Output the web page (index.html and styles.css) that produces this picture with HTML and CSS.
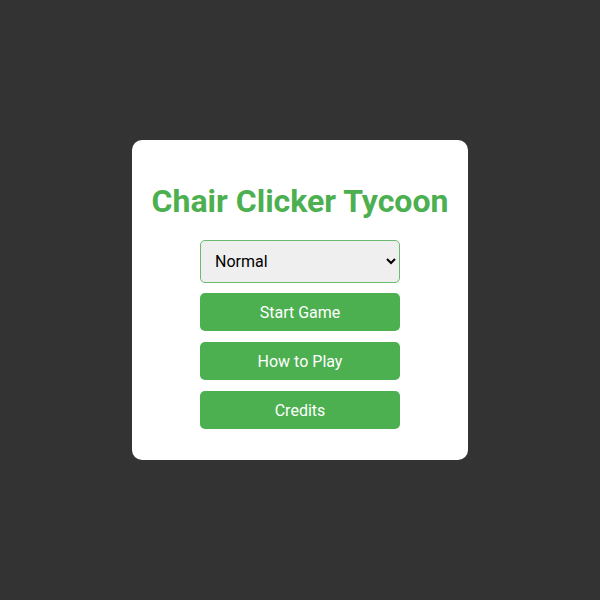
FILE: index.html
```
<!DOCTYPE html>
<html>
<head>
<meta charset="utf-8">
<link rel="stylesheet" href="styles.css">
</head>
<body>
<div class="card">
  <h1 class="title">Chair Clicker Tycoon</h1>
  <div class="menu">
    <select class="difficulty">
      <option>Easy</option>
      <option selected>Normal</option>
      <option>Hard</option>
    </select>
    <button class="btn">Start Game</button>
    <button class="btn">How to Play</button>
    <button class="btn">Credits</button>
  </div>
</div>
</body>
</html>
```
FILE: styles.css
```
html, body {
  margin: 0;
  height: 100%;
}
body {
  background: #333333;
  font-family: Roboto, "Liberation Sans", sans-serif;
  display: flex;
  align-items: center;
  justify-content: center;
}
.card {
  background: #ffffff;
  border-radius: 10px;
  padding: 20px 20px 31px;
  display: flex;
  flex-direction: column;
  align-items: center;
}
.title {
  color: #4caf50;
  font-size: 32px;
  font-weight: 700;
  margin: 23px 0 20px;
  line-height: 37px;
}
.menu {
  display: flex;
  flex-direction: column;
  gap: 10px;
  width: 200px;
}
.difficulty {
  height: 43px;
  width: 200px;
  border: 1px solid #6abb6d;
  border-radius: 5px;
  background: #efefef;
  font-family: Roboto, "Liberation Sans", sans-serif;
  font-size: 16px;
  color: #000;
  padding: 0 10px;
}
.btn {
  height: 38px;
  width: 200px;
  border: none;
  border-radius: 5px;
  background: #4caf50;
  color: #fff;
  font-family: Roboto, "Liberation Sans", sans-serif;
  font-size: 16px;
  padding: 0;
}
.btn + .btn {
  margin-top: 1px;
}
```
